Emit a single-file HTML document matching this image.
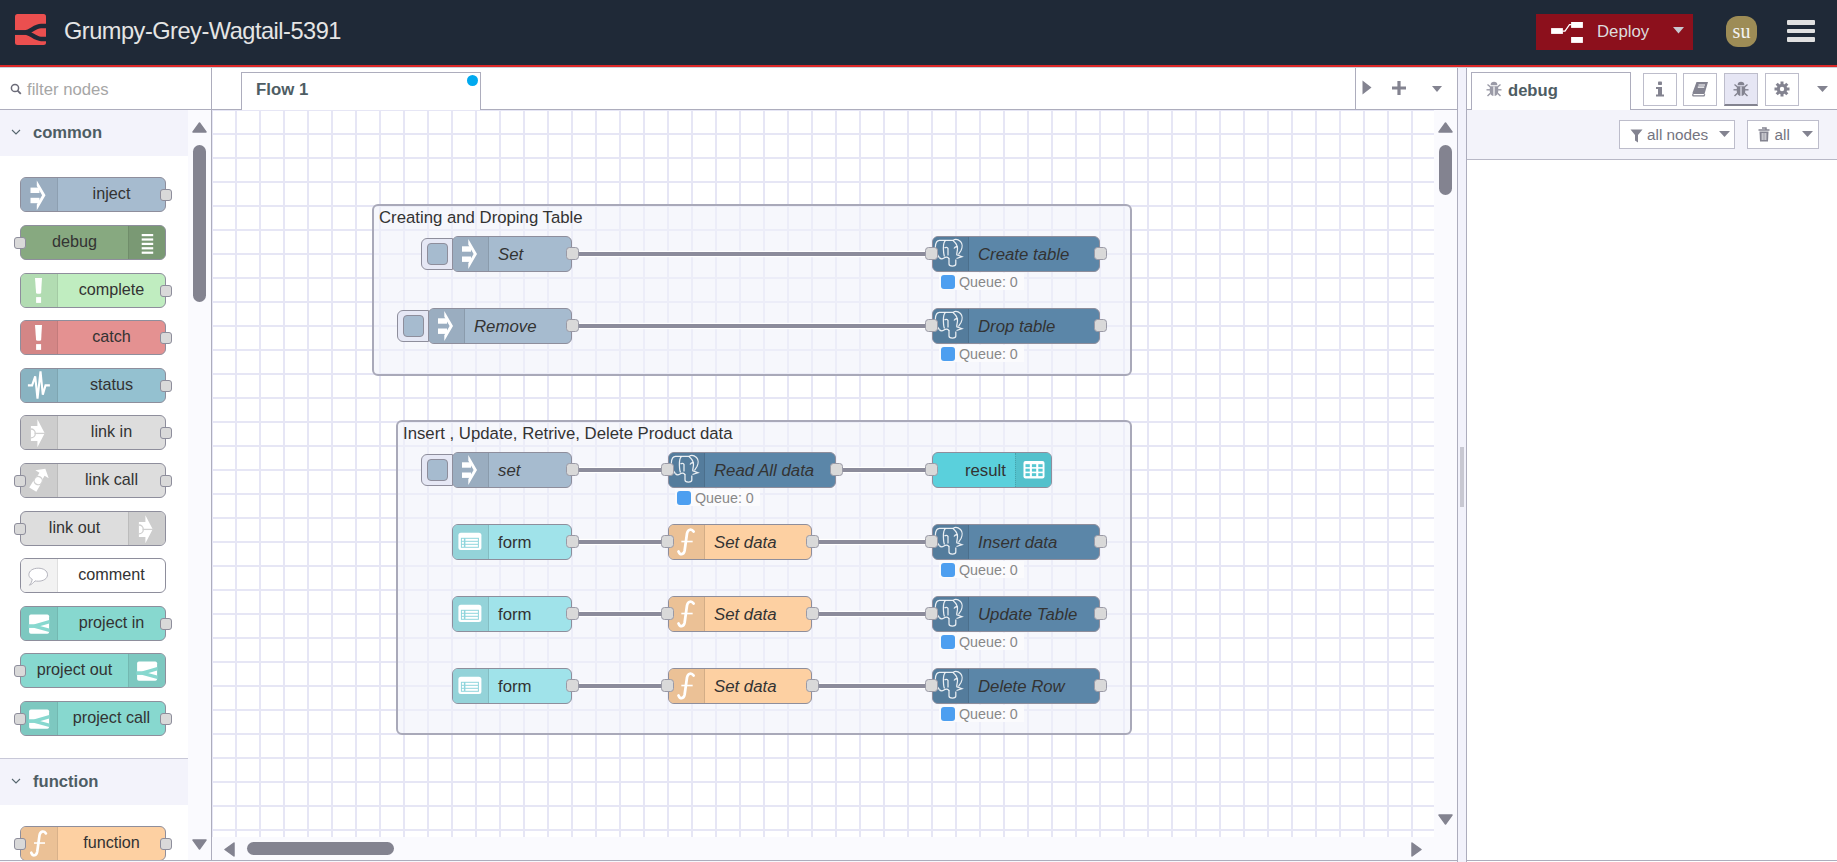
<!DOCTYPE html>
<html><head><meta charset="utf-8">
<style>
*{box-sizing:border-box;margin:0;padding:0}
html,body{width:1837px;height:862px;overflow:hidden;background:#fff;font-family:"Liberation Sans",sans-serif;position:relative}
.a{position:absolute}
#hdr{left:0;top:0;width:1837px;height:65px;background:#1f2937}
#redline{left:0;top:65px;width:1837px;height:2px;background:#dc2828}
#hshadow{left:0;top:67px;width:1837px;height:1px;background:#c9d1d9}
#title{left:64px;top:18px;font-size:23.6px;letter-spacing:-0.5px;color:#e5e5e5;white-space:nowrap;line-height:26px}
#deploy{left:1536px;top:14px;width:157px;height:36px;background:#8c101c}
#deploy .txt{left:61px;top:8px;font-size:16.8px;color:#dddddd;line-height:20px}
#avatar{left:1726px;top:16px;width:31px;height:31px;border-radius:12px;background:#9d8c56;color:#f3f3f3;font-family:"Liberation Serif",serif;font-size:20px;text-align:center;line-height:30px}
.ham{left:1787px;width:28px;height:4.5px;background:#e0e0e0;border-radius:1px}

#palette{left:0;top:67px;width:211px;height:793px;background:#fff}
#pborder{left:211px;top:67px;width:1px;height:794px;background:#adadbd}
#search{left:0;top:67px;width:211px;height:43px;border-bottom:1px solid #adadbd}
#search .txt{left:27px;top:13px;font-size:16.7px;color:#a6a6a6;line-height:20px}
.cat{left:0;width:188px;height:46px;background:#f3f3fb}
.cat .txt{left:33px;top:13px;font-size:16.6px;font-weight:bold;color:#4e5d64;line-height:20px}
.cat svg{position:absolute;left:11px;top:19px}
#pscroll{left:188px;top:110px;width:23px;height:750px;background:#fafafe}
.thumb{background:#838390;border-radius:7px}

.pn{position:absolute;left:20px;width:146px;height:35px;border:1px solid #8e8e9c;border-radius:6px}
.pn .ic{position:absolute;top:0;width:37px;height:33px;background:rgba(0,0,0,0.06)}
.pn .ic.l{left:0;border-right:1px solid rgba(0,0,0,0.08);border-radius:5px 0 0 5px}
.pn .ic.r{right:0;border-left:1px solid rgba(0,0,0,0.08);border-radius:0 5px 5px 0}
.pn .lb{position:absolute;top:5px;font-size:16.2px;color:#333;line-height:20px;white-space:nowrap}
.pport{position:absolute;width:12px;height:12px;background:#d9d9d9;border:1px solid #8e8e9c;border-radius:3px;top:11px}
.pport.l{left:-7px}
.pport.r{right:-7px}

#ws{left:212px;top:67px;width:1245px;height:794px;background:#fff}
#wsborder{left:1457px;top:67px;width:1px;height:795px;background:#adadbd}
#tabbar{left:212px;top:67px;width:1245px;height:43px;border-bottom:1px solid #adadbd;background:#fff}
#tab{left:241px;top:72px;width:240px;height:38px;border:1px solid #adadbd;border-bottom:none;background:#fff}
#tab .txt{left:14px;top:7px;font-size:16.8px;font-weight:bold;color:#4e5d64;line-height:20px}
#grid{left:212px;top:110px;width:1222px;height:727px;
 background-color:#fff;
 background-image:linear-gradient(to right, #e6e6f5 0px, #e6e6f5 2px, rgba(255,255,255,0) 2px, rgba(255,255,255,0) 24px),
 linear-gradient(to bottom, #e6e6f5 0px, #e6e6f5 2px, rgba(255,255,255,0) 2px, rgba(255,255,255,0) 24px);
 background-size:24px 24px;background-position:23px 23px}
#vscroll{left:1434px;top:110px;width:23px;height:750px;background:#fafafe}
#hscroll{left:212px;top:837px;width:1222px;height:23px;background:#fafafe}
#splitter{left:1458px;top:67px;width:8px;height:795px;background:#f2f2fb}
#sborder{left:1466px;top:67px;width:1px;height:795px;background:#adadbd}
#bottomline{left:0;top:860px;width:1457px;height:1px;background:#adadbd}
#bottomline2{left:1467px;top:860px;width:370px;height:1px;background:#adadbd}
#bottomrow{left:0;top:861px;width:1457px;height:1px;background:#f7f7fc}

#sidebar{left:1467px;top:67px;width:370px;height:793px;background:#fff}
#stabbar{left:1467px;top:67px;width:370px;height:43px;border-bottom:1px solid #adadbd}
#stab{left:1471px;top:72px;width:160px;height:38px;border:1px solid #adadbd;border-bottom:none;background:#fff}
#stab .txt{left:36px;top:8px;font-size:16.6px;font-weight:bold;color:#4e5d64;line-height:20px}
.sbtn{top:73px;width:34px;height:33px;border:1px solid #bdbdcb;background:#fff}
#stool{left:1467px;top:110px;width:370px;height:50px;background:#f3f3fa;border-bottom:1px solid #b8b8c6}
.tbtn{top:120px;height:29px;border:1px solid #bdbdcb;background:#fff}
.tbtn .txt{top:4px;font-size:15.3px;color:#74747f;line-height:20px;white-space:nowrap}

.grp{position:absolute;border:2px solid #a9a9b9;border-radius:6px;background:rgba(240,242,250,0.6)}
.grp .txt{position:absolute;left:5px;top:2px;font-size:16.75px;color:#333;line-height:20px;white-space:nowrap}
.wire{position:absolute;height:3.6px;background:#8c8c9b;box-shadow:0 0 0 1.2px #fff}
.nd{position:absolute;height:36px;border:1.2px solid #8e8e9c;border-radius:6px}
.nd .ic{position:absolute;top:0;width:36px;height:100%;background:rgba(0,0,0,0.07)}
.nd .ic.l{left:0;border-right:1px solid rgba(0,0,0,0.1);border-radius:5px 0 0 5px}
.nd .ic.r{right:0;border-left:1px dotted rgba(0,0,0,0.15);border-radius:0 5px 5px 0}
.nd .lb{position:absolute;top:8px;font-size:16.8px;color:#333;line-height:20px;white-space:nowrap}
.nd .lb.i{font-style:italic}
.port{position:absolute;width:13px;height:13px;background:#d9d9d9;border:1.2px solid #9a9aa6;border-radius:3.5px;top:10.3px}
.port.l{left:-7.7px}
.port.r{right:-7.6px}
.btn{position:absolute;width:32px;height:32px;border:1.2px solid #8e8e9c;border-radius:6px 0 0 6px;background:#e6e8f5}
.btn div{position:absolute;left:5px;top:4px;width:21px;height:22px;border:1.2px solid #8e8e9c;border-radius:4px;background:#a6bbcf}
.st{position:absolute;height:17px}
.st .sq{position:absolute;left:2px;top:2px;width:14px;height:14px;background:#4d9ff0;border-radius:3px}
.st .txt{position:absolute;left:20px;top:1px;font-size:14.3px;color:#888;line-height:17px;white-space:nowrap}
</style></head>
<body>
<!-- HEADER -->
<div id="hdr" class="a">
  <svg class="a" style="left:15px;top:14px" width="31" height="31" viewBox="0 0 31 31">
    <rect x="0" y="0" width="31" height="31" rx="2.5" fill="#eb4f4f"/>
    <path d="M-1 18.4 L10 18.4 C15.5 18.4 19.5 12.1 26 12.1 L32 12.1" stroke="#1f2937" stroke-width="4.5" fill="none"/>
    <path d="M-1 18.4 L10 18.4 C15.5 18.4 19.5 24.9 26 24.9 L32 24.9" stroke="#1f2937" stroke-width="4.5" fill="none"/>
  </svg>
  <div id="title" class="a">Grumpy-Grey-Wagtail-5391</div>
  <div id="deploy" class="a">
    <svg class="a" style="left:15px;top:8px" width="33" height="21" viewBox="0 0 33 21">
      <rect x="0.1" y="6.1" width="11.8" height="5.8" fill="#fff"/>
      <path d="M11.5 9.2 L14 9.2 L18.5 2.6 L20.5 2.6" stroke="#fff" stroke-width="1.3" fill="none"/>
      <rect x="20.1" y="0" width="11.8" height="5.9" fill="#fff"/>
      <rect x="20.1" y="15" width="11.8" height="5.9" fill="#fff"/>
    </svg>
    <div class="a txt">Deploy</div>
    <svg class="a" style="left:137px;top:13px" width="11" height="7" viewBox="0 0 11 7"><path d="M0 0 L11 0 L5.5 6.5 Z" fill="#c8c8d0"/></svg>
  </div>
  <div id="avatar" class="a">su</div>
  <div class="a ham" style="top:20px"></div>
  <div class="a ham" style="top:28.7px"></div>
  <div class="a ham" style="top:37.4px"></div>
</div>
<div id="redline" class="a"></div>

<!-- PALETTE -->
<div id="palette" class="a"></div>
<div id="search" class="a">
  <svg class="a" style="left:10px;top:16px" width="12" height="12" viewBox="0 0 12 12"><circle cx="5" cy="5" r="3.6" stroke="#6b6b78" stroke-width="1.5" fill="none"/><path d="M7.6 7.6 L10.8 10.8" stroke="#6b6b78" stroke-width="1.8"/></svg>
  <div class="a txt">filter nodes</div>
</div>
<div class="a cat" style="top:110px"><svg width="10" height="6" viewBox="0 0 10 6"><path d="M1 1 L5 5 L9 1" stroke="#56666e" stroke-width="1.1" fill="none"/></svg><div class="a txt">common</div></div>
<div id="pscroll" class="a">
  <svg class="a" style="left:4px;top:12px" width="15" height="11" viewBox="0 0 15 11"><path d="M7.5 1 L14 10 L1 10 Z" fill="#838390" stroke="#838390" stroke-linejoin="round" stroke-width="1.5"/></svg>
  <div class="a thumb" style="left:5px;top:35px;width:13px;height:157px"></div>
  <svg class="a" style="left:4px;top:729px" width="15" height="11" viewBox="0 0 15 11"><path d="M1 1 L14 1 L7.5 10 Z" fill="#838390" stroke="#838390" stroke-linejoin="round" stroke-width="1.5"/></svg>
</div>
<div id="palnodes"><div class="pn" style="top:177px;background:#a6bbcf"><div class="ic l" style="background:#9aadc0"><svg width="37" height="33" viewBox="0 0 37 33" style="position:absolute;left:0;top:0"><rect x="9.50" y="9.60" width="9" height="5.4" fill="#fff"/><rect x="9.50" y="19.80" width="9" height="5.4" fill="#fff"/><path d="M15.80 2.40 L24.50 17.30 L15.80 32.20 L15.80 26.50 L21.10 17.30 L15.80 8.10 Z" fill="#fff"/></svg></div><div class="lb" style="left:37px;width:107px;text-align:center">inject</div><div class="pport r"></div></div>
<div class="pn" style="top:225px;background:#87a980"><div class="ic r" style="background:#7a9974"><svg width="37" height="33" viewBox="0 0 37 33" style="position:absolute;left:0;top:0"><rect x="12.70" y="8.00" width="11.5" height="2.2" fill="#fff"/><rect x="12.70" y="12.40" width="11.5" height="2.2" fill="#fff"/><rect x="12.70" y="16.80" width="11.5" height="2.2" fill="#fff"/><rect x="12.70" y="21.20" width="11.5" height="2.2" fill="#fff"/><rect x="12.70" y="25.60" width="11.5" height="2.2" fill="#fff"/></svg></div><div class="lb" style="left:0;width:107px;text-align:center">debug</div><div class="pport l"></div></div>
<div class="pn" style="top:273px;background:#c0edc0"><div class="ic l" style="background:#b2dcb2"><svg width="37" height="33" viewBox="0 0 37 33" style="position:absolute;left:0;top:0"><path d="M14.00 4.10 L21.00 4.10 L20.10 19.20 Q17.60 20.40 15.10 19.20 Z" fill="#fff"/><rect x="15.10" y="23.10" width="5" height="5.8" fill="#fff"/></svg></div><div class="lb" style="left:37px;width:107px;text-align:center">complete</div><div class="pport r"></div></div>
<div class="pn" style="top:320px;background:#e49191"><div class="ic l" style="background:#d48686"><svg width="37" height="33" viewBox="0 0 37 33" style="position:absolute;left:0;top:0"><path d="M14.00 4.10 L21.00 4.10 L20.10 19.20 Q17.60 20.40 15.10 19.20 Z" fill="#fff"/><rect x="15.10" y="23.10" width="5" height="5.8" fill="#fff"/></svg></div><div class="lb" style="left:37px;width:107px;text-align:center">catch</div><div class="pport r"></div></div>
<div class="pn" style="top:368px;background:#94c1d0"><div class="ic l" style="background:#89b3c1"><svg width="37" height="33" viewBox="0 0 37 33" style="position:absolute;left:0;top:0"><path d="M6.90 16.40 L11.10 16.40 L14.20 7.40 L16.50 29.60 L19.50 2.30 L21.80 25.60 L24.50 16.40 L28.90 16.40" stroke="#fff" stroke-width="2.1" fill="none" stroke-linejoin="miter" stroke-miterlimit="3"/></svg></div><div class="lb" style="left:37px;width:107px;text-align:center">status</div><div class="pport r"></div></div>
<div class="pn" style="top:415px;background:#dddddd"><div class="ic l" style="background:#cdcdcd"><svg width="37" height="33" viewBox="0 0 37 33" style="position:absolute;left:0;top:0"><path d="M9.90 9.90 L16.40 9.90 L16.40 3.20 L23.70 17.20 L16.40 31.20 L16.40 24.90 L9.90 24.90 Z" fill="#fff"/><path d="M13.60 17.40 L24.50 17.40" stroke="#d0d0d0" stroke-width="1.3"/><path d="M9.90 13.00 A4.4 4.4 0 0 1 9.90 21.80" stroke="#d0d0d0" stroke-width="1.3" fill="none"/></svg></div><div class="lb" style="left:37px;width:107px;text-align:center">link in</div><div class="pport r"></div></div>
<div class="pn" style="top:463px;background:#dddddd"><div class="ic l" style="background:#cdcdcd"><svg width="37" height="33" viewBox="0 0 37 33" style="position:absolute;left:0;top:0"><g transform="rotate(-59 17.20 16.60)"><path d="M6.70 12.50 L14.70 12.50 L14.70 20.70 L6.70 20.70 Z" fill="#fff"/><path d="M17.20 13.60 L24.60 13.60 L24.60 8.80 L31.00 16.60 L24.60 24.40 L24.60 19.60 L17.20 19.60 Z" fill="#fff"/><circle cx="17.20" cy="16.60" r="4.1" fill="#fff" stroke="#d0d0d0" stroke-width="1.3"/></g></svg></div><div class="lb" style="left:37px;width:107px;text-align:center">link call</div><div class="pport l"></div><div class="pport r"></div></div>
<div class="pn" style="top:511px;background:#dddddd"><div class="ic r" style="background:#cdcdcd"><svg width="37" height="33" viewBox="0 0 37 33" style="position:absolute;left:0;top:0"><path d="M9.90 9.90 L16.40 9.90 L16.40 3.20 L23.70 17.20 L16.40 31.20 L16.40 24.90 L9.90 24.90 Z" fill="#fff"/><path d="M13.60 17.40 L24.50 17.40" stroke="#d0d0d0" stroke-width="1.3"/><path d="M9.90 13.00 A4.4 4.4 0 0 1 9.90 21.80" stroke="#d0d0d0" stroke-width="1.3" fill="none"/></svg></div><div class="lb" style="left:0;width:107px;text-align:center">link out</div><div class="pport l"></div></div>
<div class="pn" style="top:558px;background:#ffffff"><div class="ic l" style="background:#f2f2f2"><svg width="37" height="33" viewBox="0 0 37 33" style="position:absolute;left:0;top:0"><path d="M11.20 20.20 C8.00 18.50 7.90 16.50 7.90 15.70 C7.90 11.80 12.00 9.20 17.20 9.20 C22.40 9.20 26.50 11.80 26.50 15.70 C26.50 19.60 22.40 22.20 17.20 22.20 C16.00 22.20 15.00 22.10 14.00 21.90 C12.50 23.80 10.00 25.80 8.40 26.20 C10.00 24.50 11.00 22.50 11.20 20.20 Z" fill="#fff" stroke="#ababb5" stroke-width="0.9"/></svg></div><div class="lb" style="left:37px;width:107px;text-align:center">comment</div></div>
<div class="pn" style="top:606px;background:#87d8cf"><div class="ic l" style="background:#7dc8c0"><svg width="37" height="33" viewBox="0 0 37 33" style="position:absolute;left:0;top:0"><rect x="8.10" y="7.40" width="20" height="19.3" rx="1.8" fill="#fff"/><path d="M7.60 19.05 L13.10 19.05 L28.60 14.70" stroke="#87d8cf" stroke-width="3.3" fill="none" stroke-linejoin="round"/><path d="M7.60 19.05 L13.10 19.05 L28.60 23.30" stroke="#87d8cf" stroke-width="3.3" fill="none" stroke-linejoin="round"/></svg></div><div class="lb" style="left:37px;width:107px;text-align:center">project in</div><div class="pport r"></div></div>
<div class="pn" style="top:653px;background:#87d8cf"><div class="ic r" style="background:#7dc8c0"><svg width="37" height="33" viewBox="0 0 37 33" style="position:absolute;left:0;top:0"><rect x="8.10" y="7.40" width="20" height="19.3" rx="1.8" fill="#fff"/><path d="M7.60 19.05 L13.10 19.05 L28.60 14.70" stroke="#87d8cf" stroke-width="3.3" fill="none" stroke-linejoin="round"/><path d="M7.60 19.05 L13.10 19.05 L28.60 23.30" stroke="#87d8cf" stroke-width="3.3" fill="none" stroke-linejoin="round"/></svg></div><div class="lb" style="left:0;width:107px;text-align:center">project out</div><div class="pport l"></div></div>
<div class="pn" style="top:701px;background:#87d8cf"><div class="ic l" style="background:#7dc8c0"><svg width="37" height="33" viewBox="0 0 37 33" style="position:absolute;left:0;top:0"><rect x="8.10" y="7.40" width="20" height="19.3" rx="1.8" fill="#fff"/><path d="M7.60 19.05 L13.10 19.05 L28.60 14.70" stroke="#87d8cf" stroke-width="3.3" fill="none" stroke-linejoin="round"/><path d="M7.60 19.05 L13.10 19.05 L28.60 23.30" stroke="#87d8cf" stroke-width="3.3" fill="none" stroke-linejoin="round"/></svg></div><div class="lb" style="left:37px;width:107px;text-align:center">project call</div><div class="pport l"></div><div class="pport r"></div></div>
<div class="pn" style="top:826px;background:#fdd0a2"><div class="ic l" style="background:#ebc196"><svg width="37" height="33" viewBox="0 0 37 33" style="position:absolute;left:0;top:0"><path d="M24.92 6.42 C23.08 3.67 19.42 3.67 18.50 8.25 L16.21 24.75 C15.29 29.33 11.62 29.33 10.25 25.67" stroke="#fff" stroke-width="2.66" fill="none" stroke-linecap="round"/><path d="M13.00 16.04 L24.00 16.04" stroke="#fff" stroke-width="1.56"/></svg></div><div class="lb" style="left:37px;width:107px;text-align:center">function</div><div class="pport l"></div><div class="pport r"></div></div></div>
<div class="a" style="left:0;top:758px;width:188px;height:1px;background:#c8c8d8"></div>
<div class="a cat" style="top:759px;height:46px"><svg width="10" height="6" viewBox="0 0 10 6"><path d="M1 1 L5 5 L9 1" stroke="#56666e" stroke-width="1.1" fill="none"/></svg><div class="a txt">function</div></div>
<div id="pborder" class="a"></div>

<!-- WORKSPACE -->
<div id="ws" class="a"></div>
<div id="tabbar" class="a"></div>
<div id="tab" class="a"><div class="a txt">Flow 1</div>
  <div class="a" style="left:225px;top:1.5px;width:11px;height:11px;border-radius:50%;background:#00a9ef"></div>
</div>
<div class="a" style="left:1355px;top:67px;width:1px;height:43px;background:#adadbd"></div>
<svg class="a" style="left:1362px;top:80px" width="10" height="15" viewBox="0 0 10 15"><path d="M0.5 0.5 L9.5 7.5 L0.5 14.5 Z" fill="#838390"/></svg>
<svg class="a" style="left:1392px;top:81px" width="14" height="14" viewBox="0 0 14 14"><path d="M7 0 V14 M0 7 H14" stroke="#838390" stroke-width="3.2"/></svg>
<svg class="a" style="left:1432px;top:86px" width="10" height="6" viewBox="0 0 10 6"><path d="M0 0 L10 0 L5 6 Z" fill="#838390"/></svg>
<div id="grid" class="a"></div>
<div id="flows"><div class="grp" style="left:372px;top:204px;width:760px;height:172px"><div class="txt">Creating and Droping Table</div></div>
<div class="grp" style="left:396px;top:420px;width:736px;height:315px"><div class="txt">Insert , Update, Retrive, Delete Product data</div></div>
<div class="wire" style="left:572px;top:252.2px;width:360px"></div>
<div class="wire" style="left:572px;top:324.2px;width:360px"></div>
<div class="wire" style="left:572px;top:468.2px;width:96px"></div>
<div class="wire" style="left:836px;top:468.2px;width:96px"></div>
<div class="wire" style="left:572px;top:540.2px;width:96px"></div>
<div class="wire" style="left:812px;top:540.2px;width:120px"></div>
<div class="wire" style="left:572px;top:612.2px;width:96px"></div>
<div class="wire" style="left:812px;top:612.2px;width:120px"></div>
<div class="wire" style="left:572px;top:684.2px;width:96px"></div>
<div class="wire" style="left:812px;top:684.2px;width:120px"></div>
<div class="btn" style="left:421px;top:238px"><div></div></div><div class="nd" style="left:452px;top:236px;width:120px;background:#a6bbcf"><div class="ic l" style="background:#9aadc0"><svg width="36" height="34" viewBox="0 0 36 34" style="position:absolute;left:0;top:0"><rect x="9.00" y="9.30" width="9" height="5.4" fill="#fff"/><rect x="9.00" y="19.50" width="9" height="5.4" fill="#fff"/><path d="M15.30 2.10 L24.00 17.00 L15.30 31.90 L15.30 26.20 L20.60 17.00 L15.30 7.80 Z" fill="#fff"/></svg></div><div class="lb i" style="left:45px">Set</div><div class="port r"></div></div>
<div class="btn" style="left:397px;top:310px"><div></div></div><div class="nd" style="left:428px;top:308px;width:144px;background:#a6bbcf"><div class="ic l" style="background:#9aadc0"><svg width="36" height="34" viewBox="0 0 36 34" style="position:absolute;left:0;top:0"><rect x="9.00" y="9.30" width="9" height="5.4" fill="#fff"/><rect x="9.00" y="19.50" width="9" height="5.4" fill="#fff"/><path d="M15.30 2.10 L24.00 17.00 L15.30 31.90 L15.30 26.20 L20.60 17.00 L15.30 7.80 Z" fill="#fff"/></svg></div><div class="lb i" style="left:45px">Remove</div><div class="port r"></div></div>
<div class="nd" style="left:932px;top:236px;width:168px;background:#5b86a8"><div class="ic l" style="background:#547c9c"><svg width="36" height="34" viewBox="0 0 36 34" style="position:absolute;left:0;top:0"><path d="M6.3 20.5 C3.5 17 2.2 13 2.4 9.5 C2.6 6 4 3.6 6.5 3.4 L20 3.4" stroke="#fff" stroke-width="1.25" fill="none" opacity="0.88"/><path d="M20 3.4 C22 2 25 2.3 27.5 4.5 C29.5 6.5 29.5 10.5 28 13.5 C27 15 26 16.5 25.5 17.5" stroke="#fff" stroke-width="1.25" fill="none" opacity="0.88"/><path d="M12.5 3.4 C10.5 5 10.3 8 10.4 12 C10.5 15 10.8 18 11.5 19.5" stroke="#fff" stroke-width="1.25" fill="none" opacity="0.88"/><path d="M11.5 11 C12.5 10 14.5 10 15 11.5 L15 18.5" stroke="#fff" stroke-width="1.25" fill="none" opacity="0.88"/><path d="M6.3 20.5 C7.5 22 9.5 22 11 21 C12.5 20 14.5 20 16 21.5" stroke="#fff" stroke-width="1.25" fill="none" opacity="0.88"/><path d="M16 21 L16 27 C16 29.8 22.8 29.8 22.8 27 L22.8 22.5" stroke="#fff" stroke-width="1.25" fill="none" opacity="0.88"/><path d="M20 3.4 C22.5 5.5 24.3 8 24.5 11 C24.6 14 23.5 16 23.8 17.8 L29 19.7 L23.5 21.5" stroke="#fff" stroke-width="1.25" fill="none" opacity="0.88"/><path d="M21 11.5 C22 10 23.5 9.5 24.5 10" stroke="#fff" stroke-width="1.25" fill="none" opacity="0.88"/></svg></div><div class="lb i" style="left:45px">Create table</div><div class="port l"></div><div class="port r"></div></div><div class="st" style="left:939px;top:273px;width:85px;background:#fbfbfd"><div class="sq"></div><div class="txt">Queue: 0</div></div>
<div class="nd" style="left:932px;top:308px;width:168px;background:#5b86a8"><div class="ic l" style="background:#547c9c"><svg width="36" height="34" viewBox="0 0 36 34" style="position:absolute;left:0;top:0"><path d="M6.3 20.5 C3.5 17 2.2 13 2.4 9.5 C2.6 6 4 3.6 6.5 3.4 L20 3.4" stroke="#fff" stroke-width="1.25" fill="none" opacity="0.88"/><path d="M20 3.4 C22 2 25 2.3 27.5 4.5 C29.5 6.5 29.5 10.5 28 13.5 C27 15 26 16.5 25.5 17.5" stroke="#fff" stroke-width="1.25" fill="none" opacity="0.88"/><path d="M12.5 3.4 C10.5 5 10.3 8 10.4 12 C10.5 15 10.8 18 11.5 19.5" stroke="#fff" stroke-width="1.25" fill="none" opacity="0.88"/><path d="M11.5 11 C12.5 10 14.5 10 15 11.5 L15 18.5" stroke="#fff" stroke-width="1.25" fill="none" opacity="0.88"/><path d="M6.3 20.5 C7.5 22 9.5 22 11 21 C12.5 20 14.5 20 16 21.5" stroke="#fff" stroke-width="1.25" fill="none" opacity="0.88"/><path d="M16 21 L16 27 C16 29.8 22.8 29.8 22.8 27 L22.8 22.5" stroke="#fff" stroke-width="1.25" fill="none" opacity="0.88"/><path d="M20 3.4 C22.5 5.5 24.3 8 24.5 11 C24.6 14 23.5 16 23.8 17.8 L29 19.7 L23.5 21.5" stroke="#fff" stroke-width="1.25" fill="none" opacity="0.88"/><path d="M21 11.5 C22 10 23.5 9.5 24.5 10" stroke="#fff" stroke-width="1.25" fill="none" opacity="0.88"/></svg></div><div class="lb i" style="left:45px">Drop table</div><div class="port l"></div><div class="port r"></div></div><div class="st" style="left:939px;top:345px;width:85px;background:#fbfbfd"><div class="sq"></div><div class="txt">Queue: 0</div></div>
<div class="btn" style="left:421px;top:454px"><div></div></div><div class="nd" style="left:452px;top:452px;width:120px;background:#a6bbcf"><div class="ic l" style="background:#9aadc0"><svg width="36" height="34" viewBox="0 0 36 34" style="position:absolute;left:0;top:0"><rect x="9.00" y="9.30" width="9" height="5.4" fill="#fff"/><rect x="9.00" y="19.50" width="9" height="5.4" fill="#fff"/><path d="M15.30 2.10 L24.00 17.00 L15.30 31.90 L15.30 26.20 L20.60 17.00 L15.30 7.80 Z" fill="#fff"/></svg></div><div class="lb i" style="left:45px">set</div><div class="port r"></div></div>
<div class="nd" style="left:668px;top:452px;width:168px;background:#5b86a8"><div class="ic l" style="background:#547c9c"><svg width="36" height="34" viewBox="0 0 36 34" style="position:absolute;left:0;top:0"><path d="M6.3 20.5 C3.5 17 2.2 13 2.4 9.5 C2.6 6 4 3.6 6.5 3.4 L20 3.4" stroke="#fff" stroke-width="1.25" fill="none" opacity="0.88"/><path d="M20 3.4 C22 2 25 2.3 27.5 4.5 C29.5 6.5 29.5 10.5 28 13.5 C27 15 26 16.5 25.5 17.5" stroke="#fff" stroke-width="1.25" fill="none" opacity="0.88"/><path d="M12.5 3.4 C10.5 5 10.3 8 10.4 12 C10.5 15 10.8 18 11.5 19.5" stroke="#fff" stroke-width="1.25" fill="none" opacity="0.88"/><path d="M11.5 11 C12.5 10 14.5 10 15 11.5 L15 18.5" stroke="#fff" stroke-width="1.25" fill="none" opacity="0.88"/><path d="M6.3 20.5 C7.5 22 9.5 22 11 21 C12.5 20 14.5 20 16 21.5" stroke="#fff" stroke-width="1.25" fill="none" opacity="0.88"/><path d="M16 21 L16 27 C16 29.8 22.8 29.8 22.8 27 L22.8 22.5" stroke="#fff" stroke-width="1.25" fill="none" opacity="0.88"/><path d="M20 3.4 C22.5 5.5 24.3 8 24.5 11 C24.6 14 23.5 16 23.8 17.8 L29 19.7 L23.5 21.5" stroke="#fff" stroke-width="1.25" fill="none" opacity="0.88"/><path d="M21 11.5 C22 10 23.5 9.5 24.5 10" stroke="#fff" stroke-width="1.25" fill="none" opacity="0.88"/></svg></div><div class="lb i" style="left:45px">Read All data</div><div class="port l"></div><div class="port r"></div></div><div class="st" style="left:675px;top:489px;width:85px;background:#fbfbfd"><div class="sq"></div><div class="txt">Queue: 0</div></div>
<div class="nd" style="left:932px;top:452px;width:120px;background:#5ad0dc"><div class="ic r" style="background:#53c1cc"><svg width="36" height="34" viewBox="0 0 36 34" style="position:absolute;left:0;top:0"><rect x="7.50" y="8.00" width="21" height="17.5" rx="2" fill="#fff"/><rect x="9.50" y="11.20" width="4.3" height="2.9" fill="#55c7d2"/><rect x="15.90" y="11.20" width="4.3" height="2.9" fill="#55c7d2"/><rect x="22.30" y="11.20" width="4.3" height="2.9" fill="#55c7d2"/><rect x="9.50" y="15.70" width="4.3" height="2.9" fill="#55c7d2"/><rect x="15.90" y="15.70" width="4.3" height="2.9" fill="#55c7d2"/><rect x="22.30" y="15.70" width="4.3" height="2.9" fill="#55c7d2"/><rect x="9.50" y="20.20" width="4.3" height="2.9" fill="#55c7d2"/><rect x="15.90" y="20.20" width="4.3" height="2.9" fill="#55c7d2"/><rect x="22.30" y="20.20" width="4.3" height="2.9" fill="#55c7d2"/></svg></div><div class="lb" style="right:45px">result</div><div class="port l"></div></div>
<div class="nd" style="left:452px;top:524px;width:120px;background:#a0e3ea"><div class="ic l" style="background:#94d3d9"><svg width="36" height="34" viewBox="0 0 36 34" style="position:absolute;left:0;top:0"><rect x="5.40" y="7.80" width="23" height="17.2" rx="2.5" fill="#fff"/><rect x="7.90" y="12.80" width="18" height="10" fill="#8fd5dc"/><rect x="8.90" y="13.80" width="2" height="2" fill="#fff"/><rect x="12.40" y="13.80" width="12.5" height="2" fill="#fff"/><rect x="8.90" y="16.80" width="2" height="2" fill="#fff"/><rect x="12.40" y="16.80" width="12.5" height="2" fill="#fff"/><rect x="8.90" y="19.80" width="2" height="2" fill="#fff"/><rect x="12.40" y="19.80" width="12.5" height="2" fill="#fff"/></svg></div><div class="lb" style="left:45px">form</div><div class="port r"></div></div>
<div class="nd" style="left:668px;top:524px;width:144px;background:#fdd0a2"><div class="ic l" style="background:#ebc196"><svg width="36" height="34" viewBox="0 0 36 34" style="position:absolute;left:0;top:0"><path d="M24.61 6.61 C22.72 3.78 18.94 3.78 18.00 8.50 L15.64 25.50 C14.69 30.22 10.92 30.22 9.50 26.44" stroke="#fff" stroke-width="2.74" fill="none" stroke-linecap="round"/><path d="M12.33 16.53 L23.67 16.53" stroke="#fff" stroke-width="1.61"/></svg></div><div class="lb i" style="left:45px">Set data</div><div class="port l"></div><div class="port r"></div></div>
<div class="nd" style="left:932px;top:524px;width:168px;background:#5b86a8"><div class="ic l" style="background:#547c9c"><svg width="36" height="34" viewBox="0 0 36 34" style="position:absolute;left:0;top:0"><path d="M6.3 20.5 C3.5 17 2.2 13 2.4 9.5 C2.6 6 4 3.6 6.5 3.4 L20 3.4" stroke="#fff" stroke-width="1.25" fill="none" opacity="0.88"/><path d="M20 3.4 C22 2 25 2.3 27.5 4.5 C29.5 6.5 29.5 10.5 28 13.5 C27 15 26 16.5 25.5 17.5" stroke="#fff" stroke-width="1.25" fill="none" opacity="0.88"/><path d="M12.5 3.4 C10.5 5 10.3 8 10.4 12 C10.5 15 10.8 18 11.5 19.5" stroke="#fff" stroke-width="1.25" fill="none" opacity="0.88"/><path d="M11.5 11 C12.5 10 14.5 10 15 11.5 L15 18.5" stroke="#fff" stroke-width="1.25" fill="none" opacity="0.88"/><path d="M6.3 20.5 C7.5 22 9.5 22 11 21 C12.5 20 14.5 20 16 21.5" stroke="#fff" stroke-width="1.25" fill="none" opacity="0.88"/><path d="M16 21 L16 27 C16 29.8 22.8 29.8 22.8 27 L22.8 22.5" stroke="#fff" stroke-width="1.25" fill="none" opacity="0.88"/><path d="M20 3.4 C22.5 5.5 24.3 8 24.5 11 C24.6 14 23.5 16 23.8 17.8 L29 19.7 L23.5 21.5" stroke="#fff" stroke-width="1.25" fill="none" opacity="0.88"/><path d="M21 11.5 C22 10 23.5 9.5 24.5 10" stroke="#fff" stroke-width="1.25" fill="none" opacity="0.88"/></svg></div><div class="lb i" style="left:45px">Insert data</div><div class="port l"></div><div class="port r"></div></div><div class="st" style="left:939px;top:561px;width:85px;background:#fbfbfd"><div class="sq"></div><div class="txt">Queue: 0</div></div>
<div class="nd" style="left:452px;top:596px;width:120px;background:#a0e3ea"><div class="ic l" style="background:#94d3d9"><svg width="36" height="34" viewBox="0 0 36 34" style="position:absolute;left:0;top:0"><rect x="5.40" y="7.80" width="23" height="17.2" rx="2.5" fill="#fff"/><rect x="7.90" y="12.80" width="18" height="10" fill="#8fd5dc"/><rect x="8.90" y="13.80" width="2" height="2" fill="#fff"/><rect x="12.40" y="13.80" width="12.5" height="2" fill="#fff"/><rect x="8.90" y="16.80" width="2" height="2" fill="#fff"/><rect x="12.40" y="16.80" width="12.5" height="2" fill="#fff"/><rect x="8.90" y="19.80" width="2" height="2" fill="#fff"/><rect x="12.40" y="19.80" width="12.5" height="2" fill="#fff"/></svg></div><div class="lb" style="left:45px">form</div><div class="port r"></div></div>
<div class="nd" style="left:668px;top:596px;width:144px;background:#fdd0a2"><div class="ic l" style="background:#ebc196"><svg width="36" height="34" viewBox="0 0 36 34" style="position:absolute;left:0;top:0"><path d="M24.61 6.61 C22.72 3.78 18.94 3.78 18.00 8.50 L15.64 25.50 C14.69 30.22 10.92 30.22 9.50 26.44" stroke="#fff" stroke-width="2.74" fill="none" stroke-linecap="round"/><path d="M12.33 16.53 L23.67 16.53" stroke="#fff" stroke-width="1.61"/></svg></div><div class="lb i" style="left:45px">Set data</div><div class="port l"></div><div class="port r"></div></div>
<div class="nd" style="left:932px;top:596px;width:168px;background:#5b86a8"><div class="ic l" style="background:#547c9c"><svg width="36" height="34" viewBox="0 0 36 34" style="position:absolute;left:0;top:0"><path d="M6.3 20.5 C3.5 17 2.2 13 2.4 9.5 C2.6 6 4 3.6 6.5 3.4 L20 3.4" stroke="#fff" stroke-width="1.25" fill="none" opacity="0.88"/><path d="M20 3.4 C22 2 25 2.3 27.5 4.5 C29.5 6.5 29.5 10.5 28 13.5 C27 15 26 16.5 25.5 17.5" stroke="#fff" stroke-width="1.25" fill="none" opacity="0.88"/><path d="M12.5 3.4 C10.5 5 10.3 8 10.4 12 C10.5 15 10.8 18 11.5 19.5" stroke="#fff" stroke-width="1.25" fill="none" opacity="0.88"/><path d="M11.5 11 C12.5 10 14.5 10 15 11.5 L15 18.5" stroke="#fff" stroke-width="1.25" fill="none" opacity="0.88"/><path d="M6.3 20.5 C7.5 22 9.5 22 11 21 C12.5 20 14.5 20 16 21.5" stroke="#fff" stroke-width="1.25" fill="none" opacity="0.88"/><path d="M16 21 L16 27 C16 29.8 22.8 29.8 22.8 27 L22.8 22.5" stroke="#fff" stroke-width="1.25" fill="none" opacity="0.88"/><path d="M20 3.4 C22.5 5.5 24.3 8 24.5 11 C24.6 14 23.5 16 23.8 17.8 L29 19.7 L23.5 21.5" stroke="#fff" stroke-width="1.25" fill="none" opacity="0.88"/><path d="M21 11.5 C22 10 23.5 9.5 24.5 10" stroke="#fff" stroke-width="1.25" fill="none" opacity="0.88"/></svg></div><div class="lb i" style="left:45px">Update Table</div><div class="port l"></div><div class="port r"></div></div><div class="st" style="left:939px;top:633px;width:85px;background:#fbfbfd"><div class="sq"></div><div class="txt">Queue: 0</div></div>
<div class="nd" style="left:452px;top:668px;width:120px;background:#a0e3ea"><div class="ic l" style="background:#94d3d9"><svg width="36" height="34" viewBox="0 0 36 34" style="position:absolute;left:0;top:0"><rect x="5.40" y="7.80" width="23" height="17.2" rx="2.5" fill="#fff"/><rect x="7.90" y="12.80" width="18" height="10" fill="#8fd5dc"/><rect x="8.90" y="13.80" width="2" height="2" fill="#fff"/><rect x="12.40" y="13.80" width="12.5" height="2" fill="#fff"/><rect x="8.90" y="16.80" width="2" height="2" fill="#fff"/><rect x="12.40" y="16.80" width="12.5" height="2" fill="#fff"/><rect x="8.90" y="19.80" width="2" height="2" fill="#fff"/><rect x="12.40" y="19.80" width="12.5" height="2" fill="#fff"/></svg></div><div class="lb" style="left:45px">form</div><div class="port r"></div></div>
<div class="nd" style="left:668px;top:668px;width:144px;background:#fdd0a2"><div class="ic l" style="background:#ebc196"><svg width="36" height="34" viewBox="0 0 36 34" style="position:absolute;left:0;top:0"><path d="M24.61 6.61 C22.72 3.78 18.94 3.78 18.00 8.50 L15.64 25.50 C14.69 30.22 10.92 30.22 9.50 26.44" stroke="#fff" stroke-width="2.74" fill="none" stroke-linecap="round"/><path d="M12.33 16.53 L23.67 16.53" stroke="#fff" stroke-width="1.61"/></svg></div><div class="lb i" style="left:45px">Set data</div><div class="port l"></div><div class="port r"></div></div>
<div class="nd" style="left:932px;top:668px;width:168px;background:#5b86a8"><div class="ic l" style="background:#547c9c"><svg width="36" height="34" viewBox="0 0 36 34" style="position:absolute;left:0;top:0"><path d="M6.3 20.5 C3.5 17 2.2 13 2.4 9.5 C2.6 6 4 3.6 6.5 3.4 L20 3.4" stroke="#fff" stroke-width="1.25" fill="none" opacity="0.88"/><path d="M20 3.4 C22 2 25 2.3 27.5 4.5 C29.5 6.5 29.5 10.5 28 13.5 C27 15 26 16.5 25.5 17.5" stroke="#fff" stroke-width="1.25" fill="none" opacity="0.88"/><path d="M12.5 3.4 C10.5 5 10.3 8 10.4 12 C10.5 15 10.8 18 11.5 19.5" stroke="#fff" stroke-width="1.25" fill="none" opacity="0.88"/><path d="M11.5 11 C12.5 10 14.5 10 15 11.5 L15 18.5" stroke="#fff" stroke-width="1.25" fill="none" opacity="0.88"/><path d="M6.3 20.5 C7.5 22 9.5 22 11 21 C12.5 20 14.5 20 16 21.5" stroke="#fff" stroke-width="1.25" fill="none" opacity="0.88"/><path d="M16 21 L16 27 C16 29.8 22.8 29.8 22.8 27 L22.8 22.5" stroke="#fff" stroke-width="1.25" fill="none" opacity="0.88"/><path d="M20 3.4 C22.5 5.5 24.3 8 24.5 11 C24.6 14 23.5 16 23.8 17.8 L29 19.7 L23.5 21.5" stroke="#fff" stroke-width="1.25" fill="none" opacity="0.88"/><path d="M21 11.5 C22 10 23.5 9.5 24.5 10" stroke="#fff" stroke-width="1.25" fill="none" opacity="0.88"/></svg></div><div class="lb i" style="left:45px">Delete Row</div><div class="port l"></div><div class="port r"></div></div><div class="st" style="left:939px;top:705px;width:85px;background:#fbfbfd"><div class="sq"></div><div class="txt">Queue: 0</div></div></div>
<div id="vscroll" class="a">
  <svg class="a" style="left:4px;top:12px" width="15" height="11" viewBox="0 0 15 11"><path d="M7.5 1 L14 10 L1 10 Z" fill="#838390" stroke="#838390" stroke-linejoin="round" stroke-width="1.5"/></svg>
  <div class="a thumb" style="left:5px;top:35px;width:13px;height:50px"></div>
  <svg class="a" style="left:4px;top:704px" width="15" height="11" viewBox="0 0 15 11"><path d="M1 1 L14 1 L7.5 10 Z" fill="#838390" stroke="#838390" stroke-linejoin="round" stroke-width="1.5"/></svg>
</div>
<div id="hscroll" class="a">
  <svg class="a" style="left:12px;top:5px" width="11" height="15" viewBox="0 0 11 15"><path d="M10 1 L10 14 L1 7.5 Z" fill="#838390" stroke="#838390" stroke-linejoin="round" stroke-width="1.5"/></svg>
  <div class="a thumb" style="left:35px;top:5px;width:147px;height:13px"></div>
  <svg class="a" style="left:1199px;top:5px" width="11" height="15" viewBox="0 0 11 15"><path d="M1 1 L1 14 L10 7.5 Z" fill="#838390" stroke="#838390" stroke-linejoin="round" stroke-width="1.5"/></svg>
</div>
<div id="wsborder" class="a"></div>
<div id="splitter" class="a"></div>
<div class="a" style="left:1460px;top:447px;width:4px;height:60px;background:#c8c8d2"></div>
<div id="sborder" class="a"></div>

<!-- SIDEBAR -->
<div id="sidebar" class="a"></div>
<div id="stabbar" class="a"></div>
<div id="stab" class="a"><svg class="a" style="left:14px;top:8px" width="16" height="16" viewBox="0 0 16 16"><g fill="#9a9aa6"><path d="M4.6 4.2 C4.6 1.8 6 0.8 8 0.8 C10 0.8 11.4 1.8 11.4 4.2 Z"/><path d="M3.8 5.2 H12.2 V10.5 C12.2 13.2 10.5 15 8 15 C5.5 15 3.8 13.2 3.8 10.5 Z"/></g><path d="M8 5.5 V15" stroke="#fff" stroke-width="1.2"/><g stroke="#9a9aa6" stroke-width="1.4" fill="none"><path d="M0.5 8.8 H4"/><path d="M12 8.8 H15.5"/><path d="M1.5 3.5 L4.2 5.8"/><path d="M14.5 3.5 L11.8 5.8"/><path d="M1.5 15 L4.4 12.2"/><path d="M14.5 15 L11.6 12.2"/></g></svg><div class="a txt">debug</div></div>
<div id="sidebtns">
<div class="a sbtn" style="left:1643px"></div>
<div class="a sbtn" style="left:1683px"></div>
<div class="a sbtn" style="left:1724px;background:#e6e6f4;border-bottom:2px solid #838390"></div>
<div class="a sbtn" style="left:1765px"></div>
<svg class="a" style="left:1655px;top:81px" width="10" height="16" viewBox="0 0 10 16"><g fill="#838390"><rect x="3" y="0.5" width="4" height="3.5" rx="0.8"/><path d="M1 6 H7 V13.5 H9 V15.5 H1 V13.5 H3 V8 H1 Z"/></g></svg>
<svg class="a" style="left:1692px;top:81px" width="17" height="16" viewBox="0 0 17 16"><path d="M4.5 1 H16 L12.5 13 H1.5 C0.5 13 0.3 11.5 1 10.5 Z" fill="#838390"/><path d="M1.5 13 C0.5 13 0.5 14.8 1.5 14.8 H12 L12.8 13.3" stroke="#838390" stroke-width="1.3" fill="none"/><path d="M6.5 4 H13 M5.8 6.2 H12.3" stroke="#fff" stroke-width="1.2"/></svg>
<svg class="a" style="left:1733px;top:81px" width="16" height="16" viewBox="0 0 16 16"><g fill="#838390"><path d="M4.6 4.2 C4.6 1.8 6 0.8 8 0.8 C10 0.8 11.4 1.8 11.4 4.2 Z"/><path d="M3.8 5.2 H12.2 V10.5 C12.2 13.2 10.5 15 8 15 C5.5 15 3.8 13.2 3.8 10.5 Z"/></g><path d="M8 5.5 V15" stroke="#e6e6f4" stroke-width="1.2"/><g stroke="#838390" stroke-width="1.4" fill="none"><path d="M0.5 8.8 H4"/><path d="M12 8.8 H15.5"/><path d="M1.5 3.5 L4.2 5.8"/><path d="M14.5 3.5 L11.8 5.8"/><path d="M1.5 15 L4.4 12.2"/><path d="M14.5 15 L11.6 12.2"/></g></svg>
<svg class="a" style="left:1774px;top:81px" width="16" height="16" viewBox="0 0 16 16"><g fill="#838390"><circle cx="8" cy="8" r="5.2"/><g id="teeth"><rect x="6.5" y="0.5" width="3" height="4"/><rect x="6.5" y="11.5" width="3" height="4"/><rect x="0.5" y="6.5" width="4" height="3"/><rect x="11.5" y="6.5" width="4" height="3"/></g><g transform="rotate(45 8 8)"><rect x="6.5" y="0.5" width="3" height="4"/><rect x="6.5" y="11.5" width="3" height="4"/><rect x="0.5" y="6.5" width="4" height="3"/><rect x="11.5" y="6.5" width="4" height="3"/></g></g><circle cx="8" cy="8" r="2.2" fill="#fff"/></svg>
<svg class="a" style="left:1817px;top:86px" width="11" height="6" viewBox="0 0 11 6"><path d="M0 0 L11 0 L5.5 6 Z" fill="#838390"/></svg>
</div>
<div id="stool" class="a"></div>
<div class="a tbtn" style="left:1619px;width:116px"><svg class="a" style="left:10px;top:8px" width="13" height="14" viewBox="0 0 13 14"><path d="M0.5 0.5 H12.5 L8 6 V13.5 L5 11.5 V6 Z" fill="#838390"/></svg><div class="a txt" style="left:27px">all nodes</div><svg class="a" style="left:98.5px;top:10px" width="11" height="6" viewBox="0 0 11 6"><path d="M0 0 L11 0 L5.5 6 Z" fill="#838390"/></svg></div>
<div class="a tbtn" style="left:1747px;width:72px"><svg class="a" style="left:10px;top:6px" width="12" height="15" viewBox="0 0 12 15"><path d="M4 1 H8 V2.5 M0.5 3 H11.5" stroke="#838390" stroke-width="1.5" fill="none"/><path d="M1.5 4.5 H10.5 L10 14.5 H2 Z" fill="#838390"/><path d="M4.2 6 V13 M6 6 V13 M7.8 6 V13" stroke="#fff" stroke-width="0.8"/></svg><div class="a txt" style="left:26.5px">all</div><svg class="a" style="left:54px;top:10px" width="11" height="6" viewBox="0 0 11 6"><path d="M0 0 L11 0 L5.5 6 Z" fill="#838390"/></svg></div>

<div id="bottomline" class="a"></div><div id="bottomline2" class="a"></div>
<div id="bottomrow" class="a"></div>
<div id="hshadow" class="a"></div>
</body></html>
